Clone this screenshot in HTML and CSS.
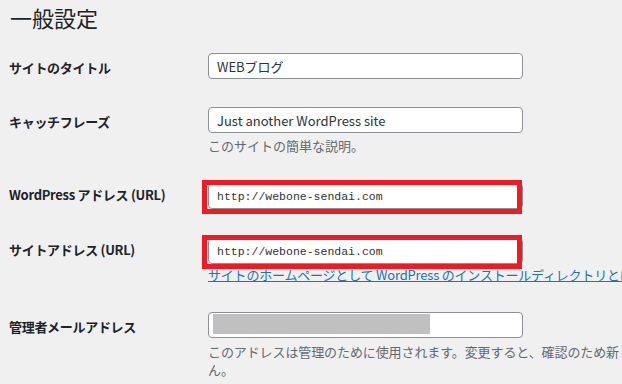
FILE: index.html
```html
<!DOCTYPE html>
<html lang="ja">
<head>
    <meta charset="UTF-8">
    <meta name="viewport" content="width=device-width, initial-scale=1.0">
    <title>一般設定</title>
    <link rel="stylesheet" href="styles.css">
</head>
<body>

<div class="wrap">
    <h1>一般設定</h1>

    <div class="row">
        <label class="label" for="blogname">サイトのタイトル</label>
        <div class="field">
            <input type="text" id="blogname" class="text-input" value="WEBブログ">
        </div>
    </div>

    <div class="row">
        <label class="label" for="blogdescription">キャッチフレーズ</label>
        <div class="field">
            <input type="text" id="blogdescription" class="text-input" value="Just another WordPress site">
            <p class="description">このサイトの簡単な説明。</p>
        </div>
    </div>

    <div class="row row-url">
        <label class="label" for="siteurl">WordPress アドレス (URL)</label>
        <div class="field">
            <div class="highlight-wrap">
                <input type="text" id="siteurl" class="text-input code" value="http://webone-sendai.com">
                <span class="highlight"></span>
            </div>
        </div>
    </div>

    <div class="row row-url">
        <label class="label" for="home">サイトアドレス (URL)</label>
        <div class="field">
            <div class="highlight-wrap">
                <input type="text" id="home" class="text-input code" value="http://webone-sendai.com">
                <span class="highlight"></span>
            </div>
            <p class="description link-line"><a href="#">サイトのホームページとして WordPress のインストールディレクトリとは異なる場所を設定する場合は、ここにアドレスを入力してください。</a></p>
        </div>
    </div>

    <div class="row row-email">
        <label class="label" for="admin_email">管理者メールアドレス</label>
        <div class="field">
            <div class="text-input fake-input" id="admin_email"><span class="redacted"></span></div>
            <p class="description tall">このアドレスは管理のために使用されます。変更すると、確認のため新しいアドレスにメールを送信します。新しいアドレスは確認が完了するまで有効になりませ<br>ん。</p>
        </div>
    </div>
</div>

</body>
</html>
```

FILE: styles.css
```css
body {
    font-family: "Noto Sans CJK JP", "Noto Sans", sans-serif;
    margin: 0;
    padding: 0;
    background-color: #f0f0f1;
    color: #1d2327;
    overflow: hidden;
    width: 622px;
    height: 384px;
}
.wrap {
    padding-left: 9px;
    width: 1200px;
}
h1 {
    font-size: 22px;
    font-weight: 400;
    line-height: 29px;
    margin: 3px 0 0 1px;
}
.row {
    display: grid;
    grid-template-columns: 199px 940px;
    margin-top: 21px;
}
.row + .row {
    margin-top: 28px;
}
.row + .row-url {
    margin-top: 25px;
}
.row-url + .row-url {
    margin-top: 26px;
}
.row-url + .row-email {
    margin-top: 28px;
}
.label {
    font-size: 13px;
    font-weight: 700;
    line-height: 20px;
    padding-top: 5px;
    letter-spacing: -0.3px;
}
.text-input {
    display: block;
    box-sizing: border-box;
    width: 315px;
    height: 26px;
    margin: 0;
    padding: 0 8px;
    font-family: "Noto Sans CJK JP", "Noto Sans", sans-serif;
    font-size: 13px;
    color: #2c3338;
    background: #fff;
    border: 1px solid #8c8f94;
    border-radius: 4px;
}
.text-input.code {
    font-family: "Liberation Mono", "DejaVu Sans Mono", monospace;
    font-size: 11.5px;
}
.highlight-wrap {
    position: relative;
    width: 315px;
    margin-top: 3px;
}
.highlight {
    position: absolute;
    left: -6px;
    top: -3px;
    width: 320px;
    height: 34px;
    box-sizing: border-box;
    border: 5px solid #ed1c24;
    pointer-events: none;
}
.description {
    font-size: 13px;
    line-height: 18px;
    color: #646970;
    margin: 4px 0 0;
    white-space: nowrap;
}
.description.link-line {
    margin-top: 2px;
    letter-spacing: -0.2px;
}
.description a {
    color: #2271b1;
}
.description.tall {
    line-height: 18px;
    margin-top: 5px;
    letter-spacing: -0.1px;
}
.fake-input {
    padding: 1px 4px;
}
.redacted {
    display: block;
    width: 217px;
    height: 20px;
    background: #c0c0c0;
}
```
